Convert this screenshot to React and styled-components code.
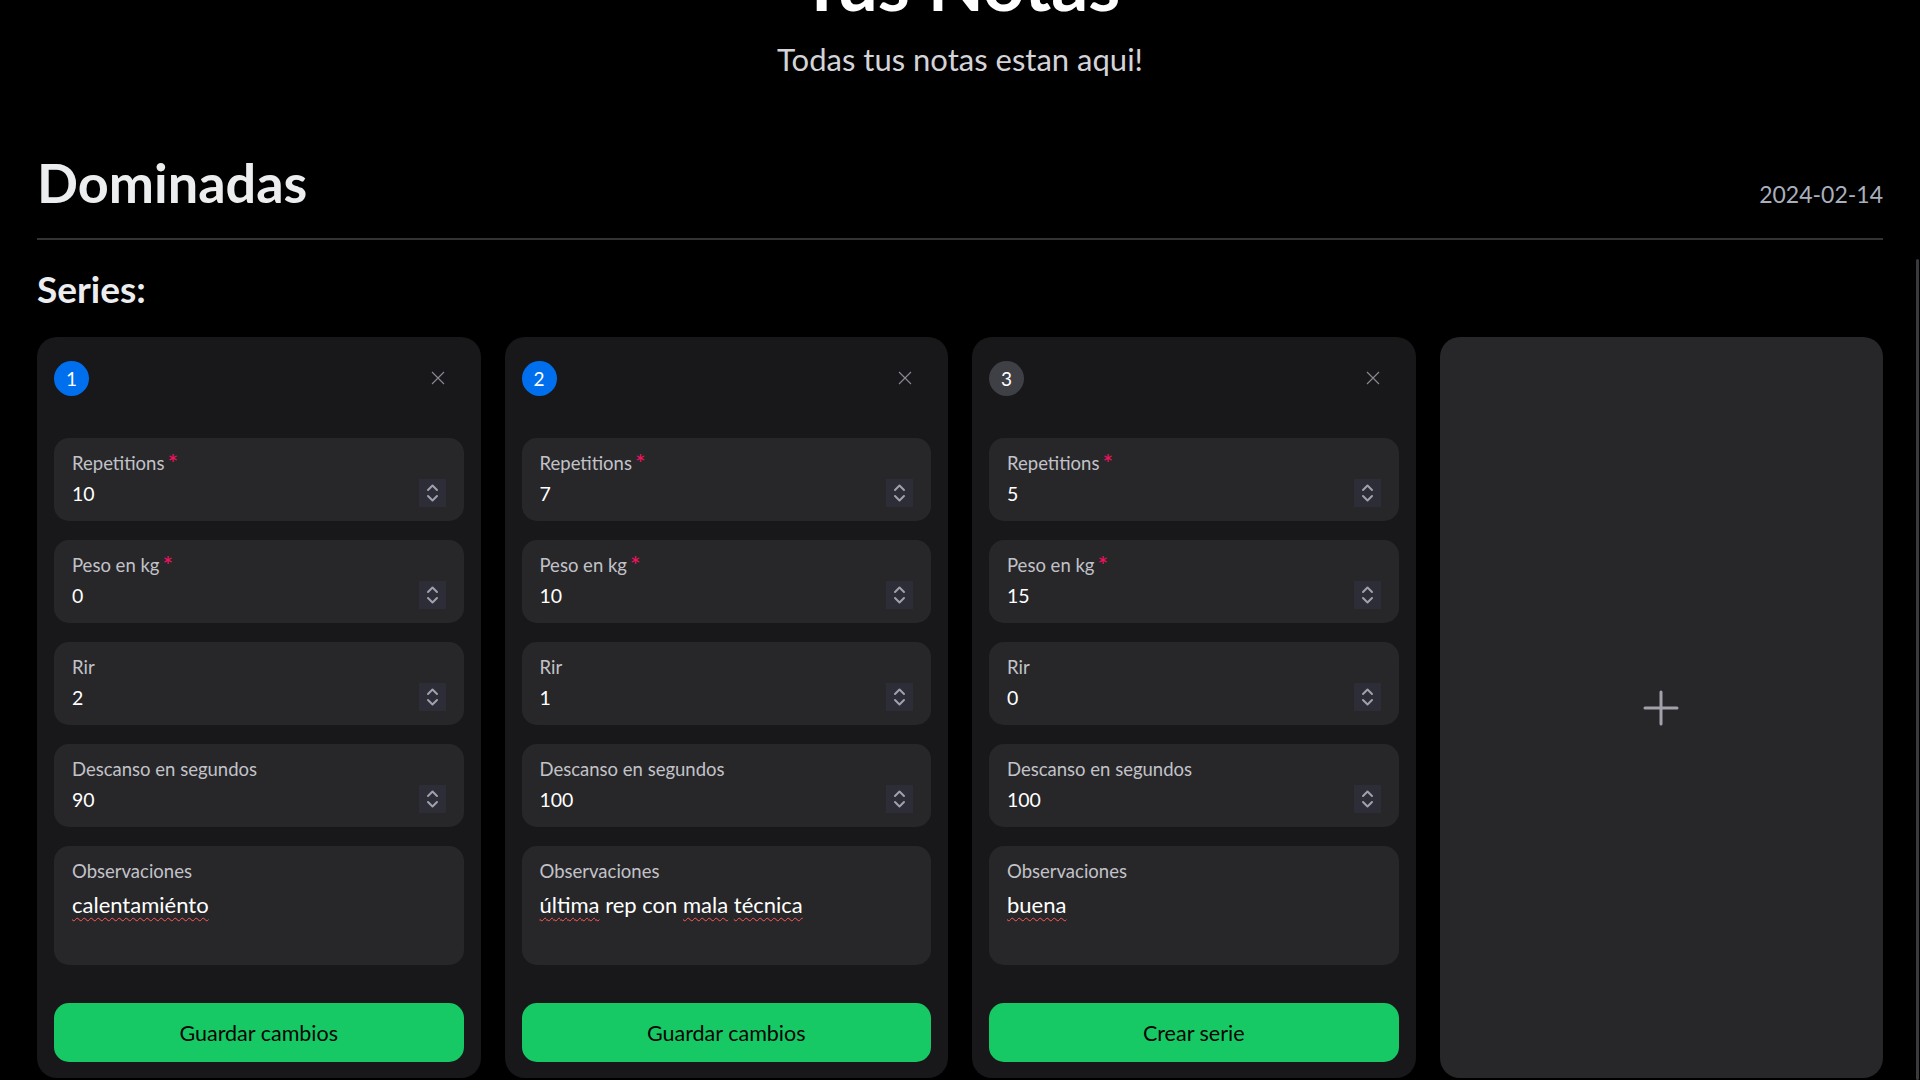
import React from "react";
import styled, { createGlobalStyle } from "styled-components";

const GlobalStyle = createGlobalStyle`
  html {
    overflow: hidden;
    background: #000000;
  }

  body {
    margin: 0;
    padding: 0;
    background: #000000;
    font-family: Lato, "Noto Sans", sans-serif;
    color: #ecedee;
  }

  * {
    box-sizing: border-box;
  }
`;

const Page = styled.main`
  padding: 0 37px 40px;
`;

const Hero = styled.header`
  text-align: center;
`;

const Title = styled.h1`
  margin: -53px 0 0;
  font-size: 73px;
  line-height: 73px;
  font-weight: 700;
  color: #ffffff;
`;

const Subtitle = styled.p`
  margin: 21px 0 0;
  font-size: 31px;
  line-height: 37px;
  color: #d4d4d8;
`;

const WorkoutHeader = styled.div`
  display: flex;
  justify-content: space-between;
  align-items: baseline;
  margin-top: 71px;
  padding-bottom: 22px;
  border-bottom: 2px solid #333336;
`;

const WorkoutName = styled.h2`
  margin: 0;
  font-size: 54px;
  line-height: 67px;
  font-weight: 700;
  color: #ecedee;
`;

const WorkoutDate = styled.span`
  font-size: 23px;
  color: #a9afbd;
`;

const SectionTitle = styled.h3`
  margin: 27px 0 0;
  font-size: 37px;
  line-height: 43px;
  font-weight: 700;
  color: #ecedee;
`;

const SeriesGrid = styled.div`
  display: grid;
  grid-template-columns: repeat(4, 1fr);
  gap: 24px;
  margin-top: 27px;
`;

const SerieCard = styled.section`
  background: #18181b;
  border-radius: 20px;
  padding: 23px 17px 16px;
  display: flex;
  flex-direction: column;
`;

const CardHeader = styled.div`
  display: flex;
  justify-content: space-between;
  align-items: center;
  height: 36px;
  margin-bottom: 42px;
`;

const Badge = styled.span`
  width: 35px;
  height: 35px;
  border-radius: 50%;
  background: ${(props) => (props.$active ? "#006fee" : "#3f3f46")};
  color: #ffffff;
  display: flex;
  align-items: center;
  justify-content: center;
  font-size: 19px;
`;

const CloseButton = styled.button`
  border: none;
  background: transparent;
  padding: 0;
  margin-right: 19px;
  width: 14px;
  height: 14px;
  display: flex;
  color: #8a8a92;
`;

const Fields = styled.div`
  display: flex;
  flex-direction: column;
  gap: 19px;
`;

const Field = styled.div`
  background: #27272a;
  border-radius: 15px;
  height: ${(props) => (props.$tall ? "119px" : "83px")};
  padding: 14px 18px 0;
  display: flex;
  flex-direction: column;
`;

const Label = styled.label`
  font-size: 18.5px;
  line-height: 23px;
  color: #c2c2c8;
`;

const Required = styled.span`
  color: #f31260;
  margin-left: 3px;
  font-size: 25px;
  line-height: 20px;
  vertical-align: -3px;
`;

const ValueRow = styled.div`
  display: flex;
  justify-content: space-between;
  align-items: center;
  height: 28px;
  margin-top: 4px;
`;

const Value = styled.span`
  font-size: 19.5px;
  line-height: 23px;
  color: #ffffff;
`;

const NoteText = styled.p`
  margin: 9px 0 0;
  font-size: 22px;
  line-height: 26px;
  color: #ffffff;
`;

const Misspelled = styled.span`
  text-decoration: underline wavy #ff5a5a;
  text-decoration-thickness: 1px;
  text-underline-offset: 4px;
`;

const Stepper = styled.span`
  width: 27px;
  height: 28px;
  background: #2d2d37;
  display: flex;
  align-items: center;
  justify-content: center;
  color: #a0a0ae;
`;

const SaveButton = styled.button`
  margin-top: 38px;
  height: 59px;
  border: none;
  border-radius: 15px;
  background: #17c964;
  color: #050505;
  font-family: inherit;
  font-size: 21.5px;
`;

const AddCard = styled.button`
  border: none;
  border-radius: 20px;
  background: #27272a;
  display: flex;
  align-items: center;
  justify-content: center;
  color: #a1a1aa;
  padding: 0;
`;

const ScrollThumb = styled.div`
  position: fixed;
  right: 1px;
  top: 259px;
  bottom: 0;
  width: 3px;
  border-radius: 2px;
  background: #3a3a3c;
`;

const series = [
  {
    id: 1,
    reps: 10,
    weight: 0,
    rir: 2,
    rest: 90,
    note: [["calentamiénto", true]],
    action: "Guardar cambios",
    active: true,
  },
  {
    id: 2,
    reps: 7,
    weight: 10,
    rir: 1,
    rest: 100,
    note: [
      ["última", true],
      [" rep con ", false],
      ["mala", true],
      [" ", false],
      ["técnica", true],
    ],
    action: "Guardar cambios",
    active: true,
  },
  {
    id: 3,
    reps: 5,
    weight: 15,
    rir: 0,
    rest: 100,
    note: [["buena", true]],
    action: "Crear serie",
    active: false,
  },
];

const StepIcon = () => (
  <svg width="13" height="20" viewBox="0 0 13 20" fill="none">
    <path
      d="M2 7 L6.5 2.5 L11 7 M2 13 L6.5 17.5 L11 13"
      stroke="currentColor"
      strokeWidth="2"
      strokeLinecap="round"
      strokeLinejoin="round"
    />
  </svg>
);

const CloseIcon = () => (
  <svg width="14" height="14" viewBox="0 0 14 14" fill="none">
    <path d="M1 1 L13 13 M13 1 L1 13" stroke="currentColor" strokeWidth="1.1" />
  </svg>
);

const NumberField = ({ label, value, required }) => (
  <Field>
    <Label>
      {label}
      {required && <Required>*</Required>}
    </Label>
    <ValueRow>
      <Value>{value}</Value>
      <Stepper>
        <StepIcon />
      </Stepper>
    </ValueRow>
  </Field>
);

const Serie = ({ serie }) => (
  <SerieCard>
    <CardHeader>
      <Badge $active={serie.active}>{serie.id}</Badge>
      <CloseButton aria-label="Eliminar serie">
        <CloseIcon />
      </CloseButton>
    </CardHeader>
    <Fields>
      <NumberField label="Repetitions" value={serie.reps} required />
      <NumberField label="Peso en kg" value={serie.weight} required />
      <NumberField label="Rir" value={serie.rir} />
      <NumberField label="Descanso en segundos" value={serie.rest} />
      <Field $tall>
        <Label>Observaciones</Label>
        <NoteText>
          {serie.note.map(([text, wrong], i) =>
            wrong ? <Misspelled key={i}>{text}</Misspelled> : <span key={i}>{text}</span>
          )}
        </NoteText>
      </Field>
    </Fields>
    <SaveButton>{serie.action}</SaveButton>
  </SerieCard>
);

export default function App() {
  return (
    <>
      <GlobalStyle />
      <Page>
        <Hero>
          <Title>Tus Notas</Title>
          <Subtitle>Todas tus notas estan aqui!</Subtitle>
        </Hero>

        <WorkoutHeader>
          <WorkoutName>Dominadas</WorkoutName>
          <WorkoutDate>2024-02-14</WorkoutDate>
        </WorkoutHeader>

        <SectionTitle>Series:</SectionTitle>

        <SeriesGrid>
          {series.map((serie) => (
            <Serie key={serie.id} serie={serie} />
          ))}
          <AddCard aria-label="Añadir serie">
            <svg width="36" height="36" viewBox="0 0 36 36" fill="none">
              <path
                d="M18 2 V34 M2 18 H34"
                stroke="currentColor"
                strokeWidth="3"
                strokeLinecap="round"
              />
            </svg>
          </AddCard>
        </SeriesGrid>
      </Page>
      <ScrollThumb />
    </>
  );
}
